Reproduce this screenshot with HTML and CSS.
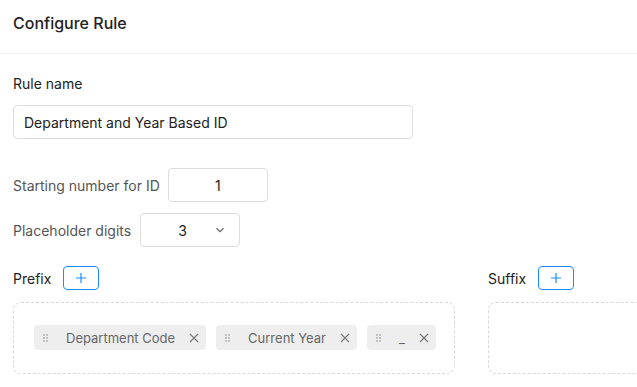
FILE: index.html
```html
<!DOCTYPE html>
<html lang="en">
<head>
    <meta charset="UTF-8">
    <meta name="viewport" content="width=device-width, initial-scale=1.0">
    <title>Configure Rule</title>
    <link rel="stylesheet" href="styles.css">
</head>
<body>
    <div class="header">
        <h2>Configure Rule</h2>
    </div>
    <div class="content">
        <p class="label">Rule name</p>
        <input type="text" class="rule-name" value="Department and Year Based ID">

        <div class="row first">
            <span class="row-label">Starting number for ID</span>
            <input type="text" class="small-box" value="1">
        </div>
        <div class="row">
            <span class="row-label">Placeholder digits</span>
            <div class="small-box select">
                <span>3</span>
                <svg width="10" height="6" viewBox="0 0 10 6"><path d="M1.5 1.2 5 4.6 8.5 1.2" fill="none" stroke="#666" stroke-width="1.2"/></svg>
            </div>
        </div>

        <div class="parts">
            <div class="part">
                <div class="part-head">
                    <span>Prefix</span>
                    <button class="add">
                        <svg width="10" height="10" viewBox="0 0 10 10"><path d="M5 0v10M0 5h10" stroke="#1a8cff" stroke-width="1.2"/></svg>
                    </button>
                </div>
                <div class="drop">
                    <div class="chip">
                        <svg class="handle" width="5" height="8" viewBox="0 0 5 8"><g fill="#888"><circle cx="1" cy="1" r="0.8"/><circle cx="4" cy="1" r="0.8"/><circle cx="1" cy="4" r="0.8"/><circle cx="4" cy="4" r="0.8"/><circle cx="1" cy="7" r="0.8"/><circle cx="4" cy="7" r="0.8"/></g></svg>
                        <span class="chip-text">Department Code</span>
                        <svg class="close" width="10" height="10" viewBox="0 0 10 10"><path d="M1 1l8 8M9 1l-8 8" stroke="#777" stroke-width="1.1"/></svg>
                    </div>
                    <div class="chip">
                        <svg class="handle" width="5" height="8" viewBox="0 0 5 8"><g fill="#888"><circle cx="1" cy="1" r="0.8"/><circle cx="4" cy="1" r="0.8"/><circle cx="1" cy="4" r="0.8"/><circle cx="4" cy="4" r="0.8"/><circle cx="1" cy="7" r="0.8"/><circle cx="4" cy="7" r="0.8"/></g></svg>
                        <span class="chip-text">Current Year</span>
                        <svg class="close" width="10" height="10" viewBox="0 0 10 10"><path d="M1 1l8 8M9 1l-8 8" stroke="#777" stroke-width="1.1"/></svg>
                    </div>
                    <div class="chip">
                        <svg class="handle" width="5" height="8" viewBox="0 0 5 8"><g fill="#888"><circle cx="1" cy="1" r="0.8"/><circle cx="4" cy="1" r="0.8"/><circle cx="1" cy="4" r="0.8"/><circle cx="4" cy="4" r="0.8"/><circle cx="1" cy="7" r="0.8"/><circle cx="4" cy="7" r="0.8"/></g></svg>
                        <span class="chip-text">_</span>
                        <svg class="close" width="10" height="10" viewBox="0 0 10 10"><path d="M1 1l8 8M9 1l-8 8" stroke="#777" stroke-width="1.1"/></svg>
                    </div>
                </div>
            </div>
            <div class="part">
                <div class="part-head">
                    <span>Suffix</span>
                    <button class="add">
                        <svg width="10" height="10" viewBox="0 0 10 10"><path d="M5 0v10M0 5h10" stroke="#1a8cff" stroke-width="1.2"/></svg>
                    </button>
                </div>
                <div class="drop"></div>
            </div>
        </div>
    </div>
</body>
</html>
```
FILE: styles.css
```css
html, body {
    margin: 0;
    overflow: hidden;
}

body {
    font-family: 'Inter', sans-serif;
    font-size: 14px;
    color: #222;
    background: #fff;
}

.header {
    height: 54px;
    box-sizing: border-box;
    padding: 13px 13px 0;
    border-bottom: 1px solid #f0f0f0;
}

h2 {
    margin: 0;
    font-size: 16px;
    font-weight: 500;
    line-height: 20px;
    color: #222;
}

.content {
    padding: 0 13px;
    width: 920px;
}

.label {
    margin: 21px 0 13px;
    line-height: 17px;
}

input {
    font-family: 'Inter', sans-serif;
    font-size: 14px;
    color: #222;
    outline: none;
}

.rule-name {
    display: block;
    width: 400px;
    height: 34px;
    box-sizing: border-box;
    border: 1px solid #dcdcdc;
    border-radius: 4px;
    padding: 0 10px;
}

.row {
    display: flex;
    align-items: center;
    gap: 9px;
    margin-top: 11px;
}

.row.first {
    margin-top: 29px;
}

.row-label {
    color: #555;
}

.small-box {
    width: 100px;
    height: 34px;
    box-sizing: border-box;
    border: 1px solid #dcdcdc;
    border-radius: 4px;
    text-align: center;
}

.row.first .small-box {
    margin-left: -1px;
}

.select {
    display: flex;
    align-items: center;
    padding: 0 14px 0 37px;
    justify-content: space-between;
}

.parts {
    display: flex;
    gap: 33px;
    margin-top: 19px;
}

.part {
    width: 442px;
    flex-shrink: 0;
}

.part-head {
    display: flex;
    align-items: center;
    gap: 12px;
    height: 24px;
}

.add {
    width: 36px;
    height: 24px;
    box-sizing: border-box;
    border: 1px solid #1a8cff;
    border-radius: 4px;
    background: #fff;
    padding: 0;
    display: flex;
    align-items: center;
    justify-content: center;
    cursor: pointer;
}

.drop {
    margin-top: 12px;
    height: 72px;
    box-sizing: border-box;
    border: 1px dashed #d8d8d8;
    border-radius: 8px;
    padding: 22px 20px;
    display: flex;
    gap: 10px;
    align-items: flex-start;
}

.chip {
    display: flex;
    align-items: center;
    flex-shrink: 0;
    white-space: nowrap;
    height: 25px;
    background: #eeeeee;
    border-radius: 4px;
    padding: 0 7px 0 9px;
    color: #666;
    font-size: 13px;
}

.handle {
    margin-right: 18px;
}

.chip-text {
    margin-right: 14px;
}
```
